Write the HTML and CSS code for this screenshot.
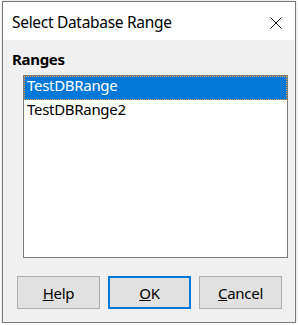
FILE: index.html
```html
<!DOCTYPE html>
<html>
<head>
<meta charset="utf-8">
<link rel="stylesheet" href="styles.css">
</head>
<body>
<div class="window">
  <div class="titlebar">
    <span class="title">Select Database Range</span>
    <svg class="close" width="12" height="12" viewBox="0 0 12 12"><path d="M0.5 0.5 L11.5 11.5 M11.5 0.5 L0.5 11.5" stroke="#111" stroke-width="1" fill="none"/></svg>
  </div>
  <div class="content">
    <div class="label">Ranges</div>
    <div class="listbox">
      <div class="item selected">TestDBRange</div>
      <div class="item">TestDBRange2</div>
    </div>
    <div class="buttons">
      <button class="btn"><u>H</u>elp</button>
      <button class="btn default"><u>O</u>K</button>
      <button class="btn"><u>C</u>ancel</button>
    </div>
  </div>
</div>
</body>
</html>
```

FILE: styles.css
```css
html, body {
  margin: 0;
  padding: 0;
  background: #ffffff;
}
body {
  font-family: "Noto Sans", "Open Sans", sans-serif;
  font-size: 15px;
  letter-spacing: -0.3px;
  color: #000;
}
.window {
  box-sizing: border-box;
  width: 294px;
  height: 322px;
  margin: 1px 0 0 2px;
  border: 1px solid #7a7a7a;
  background: #f0f0f0;
  display: flex;
  flex-direction: column;
  box-shadow: 0 0 2px rgba(0,0,0,0.25);
}
.titlebar {
  height: 38px;
  background: #ffffff;
  display: flex;
  align-items: center;
  padding: 0 13px 0 9px;
  flex: none;
}
.title {
  font-size: 15.5px;
  line-height: 20px;
  margin-top: 1px;
}
.close {
  margin-left: auto;
  margin-top: 3px;
  display: block;
}
.content {
  flex: 1;
  display: flex;
  flex-direction: column;
  padding: 8px 0 13px 0;
}
.label {
  font-weight: bold;
  line-height: 20px;
  padding-left: 9px;
  margin-top: 1px;
}
.listbox {
  box-sizing: border-box;
  margin: 6px 0 0 20px;
  width: 265px;
  height: 183px;
  border: 1px solid #7a7a7a;
  background: #ffffff;
}
.item {
  box-sizing: border-box;
  height: 24px;
  line-height: 18px;
  padding-left: 3px;
  white-space: nowrap;
}
.item.selected {
  background: #0078d7;
  color: #ffffff;
  outline: 1px dotted #f7a040;
  outline-offset: -1px;
}
.buttons {
  display: flex;
  gap: 8px;
  margin-top: 18px;
  padding-left: 14px;
}
.btn {
  box-sizing: border-box;
  width: 83px;
  height: 33px;
  border: 1px solid #adadad;
  background: #e1e1e1;
  font-family: "Noto Sans", "Open Sans", sans-serif;
  font-size: 15px;
  letter-spacing: -0.3px;
  color: #000;
  padding: 0;
  line-height: 20px;
}
.btn.default {
  border: 2px solid #0078d7;
}
```
